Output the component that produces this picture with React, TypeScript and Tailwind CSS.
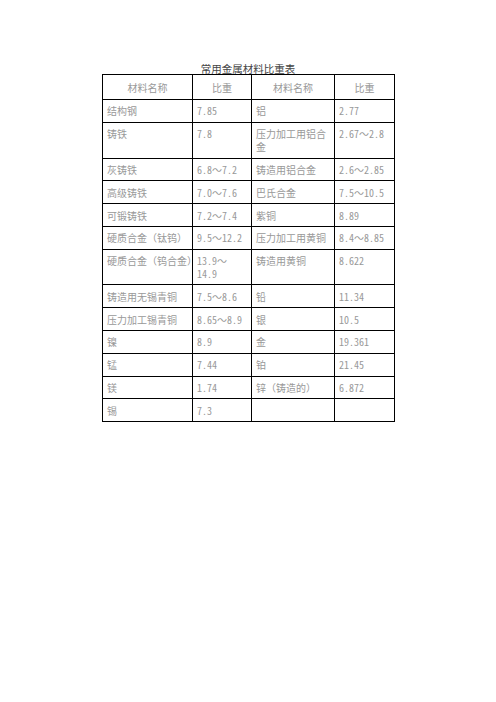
import React from "react";

type Row = {
  a: React.ReactNode;
  b: React.ReactNode;
  c?: React.ReactNode;
  d?: React.ReactNode;
};

const rows: Row[] = [
  { a: "结构钢", b: "7.85", c: "铝", d: "2.77" },
  {
    a: "铸铁",
    b: "7.8",
    c: (
      <>
        压力加工用铝合
        <br />金
      </>
    ),
    d: "2.67～2.8",
  },
  { a: "灰铸铁", b: "6.8～7.2", c: "铸造用铝合金", d: "2.6～2.85" },
  { a: "高级铸铁", b: "7.0～7.6", c: "巴氏合金", d: "7.5～10.5" },
  { a: "可锻铸铁", b: "7.2～7.4", c: "紫铜", d: "8.89" },
  { a: "硬质合金（钛钨）", b: "9.5～12.2", c: "压力加工用黄铜", d: "8.4～8.85" },
  {
    a: "硬质合金（钨合金）",
    b: (
      <>
        13.9～
        <br />
        14.9
      </>
    ),
    c: "铸造用黄铜",
    d: "8.622",
  },
  { a: "铸造用无锡青铜", b: "7.5～8.6", c: "铅", d: "11.34" },
  { a: "压力加工锡青铜", b: "8.65～8.9", c: "银", d: "10.5" },
  { a: "镍", b: "8.9", c: "金", d: "19.361" },
  { a: "锰", b: "7.44", c: "铂", d: "21.45" },
  { a: "镁", b: "1.74", c: "锌（铸造的）", d: "6.872" },
  { a: "锡", b: "7.3" },
];

// cells keep their text on one line; the long name in col 1 may spill into the padding
const cell =
  "border border-black pl-[4px] pr-0 py-[4.4px] align-top text-left whitespace-nowrap";
const head =
  "border border-black px-[4px] py-[5.5px] text-center font-normal whitespace-nowrap";

export default function App() {
  return (
    <div
      className="min-h-[702px] w-full bg-white pt-[64px]"
      style={{ fontFamily: '"Noto Sans Mono CJK SC", "Noto Sans CJK SC", sans-serif' }}
    >
      <div className="mx-auto w-[292px]">
        <h1 className="text-center text-[10.5px] leading-[10px] font-normal text-[#444]">
          常用金属材料比重表
        </h1>

        <table className="w-[292px] table-fixed border-collapse text-[10px] leading-[13px] text-[#999]">
          <colgroup>
            <col className="w-[90px]" />
            <col className="w-[59px]" />
            <col className="w-[83px]" />
            <col className="w-[60px]" />
          </colgroup>
          <thead>
            <tr>
              <th className={head}>材料名称</th>
              <th className={head}>比重</th>
              <th className={head}>材料名称</th>
              <th className={head}>比重</th>
            </tr>
          </thead>
          <tbody>
            {rows.map((r, i) => (
              <tr key={i}>
                <td className={cell}>{r.a}</td>
                <td className={cell}>{r.b}</td>
                <td className={cell}>{r.c ?? ""}</td>
                <td className={cell}>{r.d ?? ""}</td>
              </tr>
            ))}
          </tbody>
        </table>
      </div>
    </div>
  );
}
